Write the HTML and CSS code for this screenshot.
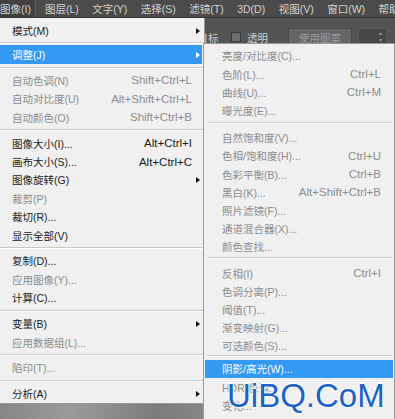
FILE: index.html
```html
<!DOCTYPE html>
<html>
<head>
    <title>图像 - 调整</title>
    <link rel="stylesheet" href="styles.css">
</head>
<body>
    <div class="app">
        <div class="menubar">
            <span class="top-item active">图像(I)</span>
            <span class="top-item">图层(L)</span>
            <span class="top-item">文字(Y)</span>
            <span class="top-item">选择(S)</span>
            <span class="top-item">滤镜(T)</span>
            <span class="top-item">3D(D)</span>
            <span class="top-item">视图(V)</span>
            <span class="top-item">窗口(W)</span>
            <span class="top-item">帮助(H)</span>
        </div>

        <div class="options">
            <span class="radio"></span>
            <span class="opt-text">目标</span>
            <span class="check"></span>
            <span class="opt-text gap">透明</span>
            <span class="opt-button">使用图案</span>
            <span class="pattern">
                <svg class="spin" width="5" height="12" viewBox="0 0 5 12">
                    <path d="M2.5 1 L4.5 4 L0.5 4 Z M2.5 11 L4.5 8 L0.5 8 Z" fill="#8a8a8a"/>
                </svg>
            </span>
        </div>

        <div class="canvas"></div>

        <!-- Image menu -->
        <div class="menu image-menu">
            <div class="row"><span class="label">模式(M)</span><span class="arrow"></span></div>
            <div class="sep tight"></div>
            <div class="row on"><span class="label">调整(J)</span><span class="arrow"></span></div>
            <div class="sep"></div>
            <div class="row off"><span class="label">自动色调(N)</span><span class="key">Shift+Ctrl+L</span></div>
            <div class="row off"><span class="label">自动对比度(U)</span><span class="key">Alt+Shift+Ctrl+L</span></div>
            <div class="row off"><span class="label">自动颜色(O)</span><span class="key">Shift+Ctrl+B</span></div>
            <div class="sep"></div>
            <div class="row"><span class="label">图像大小(I)...</span><span class="key">Alt+Ctrl+I</span></div>
            <div class="row"><span class="label">画布大小(S)...</span><span class="key">Alt+Ctrl+C</span></div>
            <div class="row"><span class="label">图像旋转(G)</span><span class="arrow"></span></div>
            <div class="row off"><span class="label">裁剪(P)</span></div>
            <div class="row"><span class="label">裁切(R)...</span></div>
            <div class="row"><span class="label">显示全部(V)</span></div>
            <div class="sep"></div>
            <div class="row"><span class="label">复制(D)...</span></div>
            <div class="row off"><span class="label">应用图像(Y)...</span></div>
            <div class="row"><span class="label">计算(C)...</span></div>
            <div class="sep"></div>
            <div class="row"><span class="label">变量(B)</span><span class="arrow"></span></div>
            <div class="row off"><span class="label">应用数据组(L)...</span></div>
            <div class="sep"></div>
            <div class="row off"><span class="label">陷印(T)...</span></div>
            <div class="sep"></div>
            <div class="row"><span class="label">分析(A)</span><span class="arrow"></span></div>
        </div>

        <!-- Adjustments submenu -->
        <div class="menu adjust-menu">
            <div class="row off"><span class="label">亮度/对比度(C)...</span></div>
            <div class="row off"><span class="label">色阶(L)...</span><span class="key">Ctrl+L</span></div>
            <div class="row off"><span class="label">曲线(U)...</span><span class="key">Ctrl+M</span></div>
            <div class="row off"><span class="label">曝光度(E)...</span></div>
            <div class="sep first"></div>
            <div class="row off"><span class="label">自然饱和度(V)...</span></div>
            <div class="row off"><span class="label">色相/饱和度(H)...</span><span class="key">Ctrl+U</span></div>
            <div class="row off"><span class="label">色彩平衡(B)...</span><span class="key">Ctrl+B</span></div>
            <div class="row off"><span class="label">黑白(K)...</span><span class="key">Alt+Shift+Ctrl+B</span></div>
            <div class="row off"><span class="label">照片滤镜(F)...</span></div>
            <div class="row off"><span class="label">通道混合器(X)...</span></div>
            <div class="row off"><span class="label">颜色查找...</span></div>
            <div class="sep"></div>
            <div class="row off"><span class="label">反相(I)</span><span class="key">Ctrl+I</span></div>
            <div class="row off"><span class="label">色调分离(P)...</span></div>
            <div class="row off"><span class="label">阈值(T)...</span></div>
            <div class="row off"><span class="label">渐变映射(G)...</span></div>
            <div class="row off"><span class="label">可选颜色(S)...</span></div>
            <div class="sep tight"></div>
            <div class="row on"><span class="label">阴影/高光(W)...</span></div>
            <div class="row off"><span class="label">HDR 色调...</span></div>
            <div class="row off"><span class="label">变化...</span></div>
        </div>

        <div class="watermark">UiBQ.CoM</div>
    </div>
</body>
</html>
```

FILE: styles.css
```css
* {
    box-sizing: border-box;
}

body {
    margin: 0;
    width: 395px;
    height: 419px;
    overflow: hidden;
    font-family: 'Liberation Sans', 'Noto Sans CJK SC', sans-serif;
    background-color: #4a4a4a;
}

.app {
    position: relative;
    width: 395px;
    height: 419px;
    overflow: hidden;
}

/* top menu bar */
.menubar {
    display: flex;
    align-items: center;
    height: 18px;
    background-color: #4b4b4b;
    border-bottom: 1px solid #383838;
    font-size: 10.5px;
    color: #d2d2d2;
    white-space: nowrap;
}

.top-item {
    display: flex;
    align-items: center;
    height: 100%;
}

.top-item + .top-item {
    margin-left: 13.5px;
}

.top-item.active {
    padding-right: 4px;
    background-color: #414141;
    border-right: 1px solid #5e5e5e;
}

.top-item.active + .top-item {
    margin-left: 9px;
}

/* tool options bar */
.options {
    display: flex;
    align-items: center;
    height: 38px;
    padding-left: 186px;
    background-color: #545454;
    font-size: 10.5px;
    color: #cfcfcf;
    white-space: nowrap;
}

.radio {
    width: 10px;
    height: 10px;
    margin-right: 1.5px;
    border-radius: 50%;
    background-color: #6e6e6e;
}

.check {
    width: 10px;
    height: 10px;
    margin-left: 12.5px;
    background-color: #6c6c6c;
    border: 1px solid #3b3b3b;
}

.opt-text.gap {
    margin-left: 6px;
}

.opt-button {
    display: flex;
    align-items: center;
    justify-content: center;
    width: 64px;
    height: 19px;
    margin-left: 20px;
    background-color: #666;
    border: 1px solid #474747;
    color: #9a9a9a;
}

.pattern {
    display: flex;
    align-items: center;
    justify-content: flex-end;
    width: 29px;
    height: 19px;
    margin-left: 6px;
    padding-right: 3px;
    background-color: #474747;
    border: 1px solid #5c5c5c;
}

.canvas {
    height: 363px;
    background: linear-gradient(90deg, #858585 0%, #9a9a9a 18%, #7b7b7b 40%, #8f8f8f 62%, #555 74%, #2c2c2c 86%, #3a3a3a 100%);
}

/* dropdown menus */
.menu {
    position: absolute;
    background-color: #f0f0f0;
    border: 1px solid #9a9a9a;
    white-space: nowrap;
}

.image-menu {
    left: 0;
    top: 18px;
    width: 205px;
    padding-top: 3.5px;
    border-width: 0 1px 1px 0;
}

.adjust-menu {
    left: 203px;
    top: 43px;
    width: 192px;
    height: 400px;
    padding-top: 2.9px;
}

.row {
    display: flex;
    align-items: center;
    height: 18.4px;
    color: #1b1b1b;
}

.image-menu .row {
    margin-right: 2px;
    padding-left: 12px;
}

.adjust-menu .row {
    height: 18.2px;
    margin: 0 1px;
    padding: 0 12px 0 17px;
}

.label {
    flex: 1;
    font-size: 10.5px;
}

.key {
    font-size: 11.5px;
}

.image-menu .key {
    margin-right: 10px;
}

.arrow {
    width: 0;
    height: 0;
    margin-right: 2px;
    border-left: 4px solid #111;
    border-top: 3.5px solid transparent;
    border-bottom: 3.5px solid transparent;
}

.row.off {
    color: #8d8d8d;
}

.row.on {
    background-color: #3399f3;
    color: #fff;
}

.row.on .arrow {
    border-left-color: #fff;
}

.sep {
    margin: 3px 1px 2.5px 0;
    border-top: 1px solid #cacaca;
    border-bottom: 1px solid #fff;
}

.sep.tight {
    margin-top: 2px;
    margin-bottom: 1.5px;
}

.adjust-menu .sep {
    margin: 1.5px 1px 4.5px 3px;
}

.adjust-menu .sep.first {
    margin-top: 2.5px;
    margin-bottom: 4.5px;
}

.adjust-menu .sep.tight {
    margin-top: 0.5px;
    margin-bottom: 2.5px;
}

/* site watermark */
.watermark {
    position: absolute;
    left: 227px;
    top: 378.7px;
    font-size: 33px;
    line-height: 33px;
    color: #1c62c4;
    text-shadow: 1px 0 #fff, -1px 0 #fff, 0 1px #fff, 0 -1px #fff, 0.5px 0 #1c62c4;
}
```
